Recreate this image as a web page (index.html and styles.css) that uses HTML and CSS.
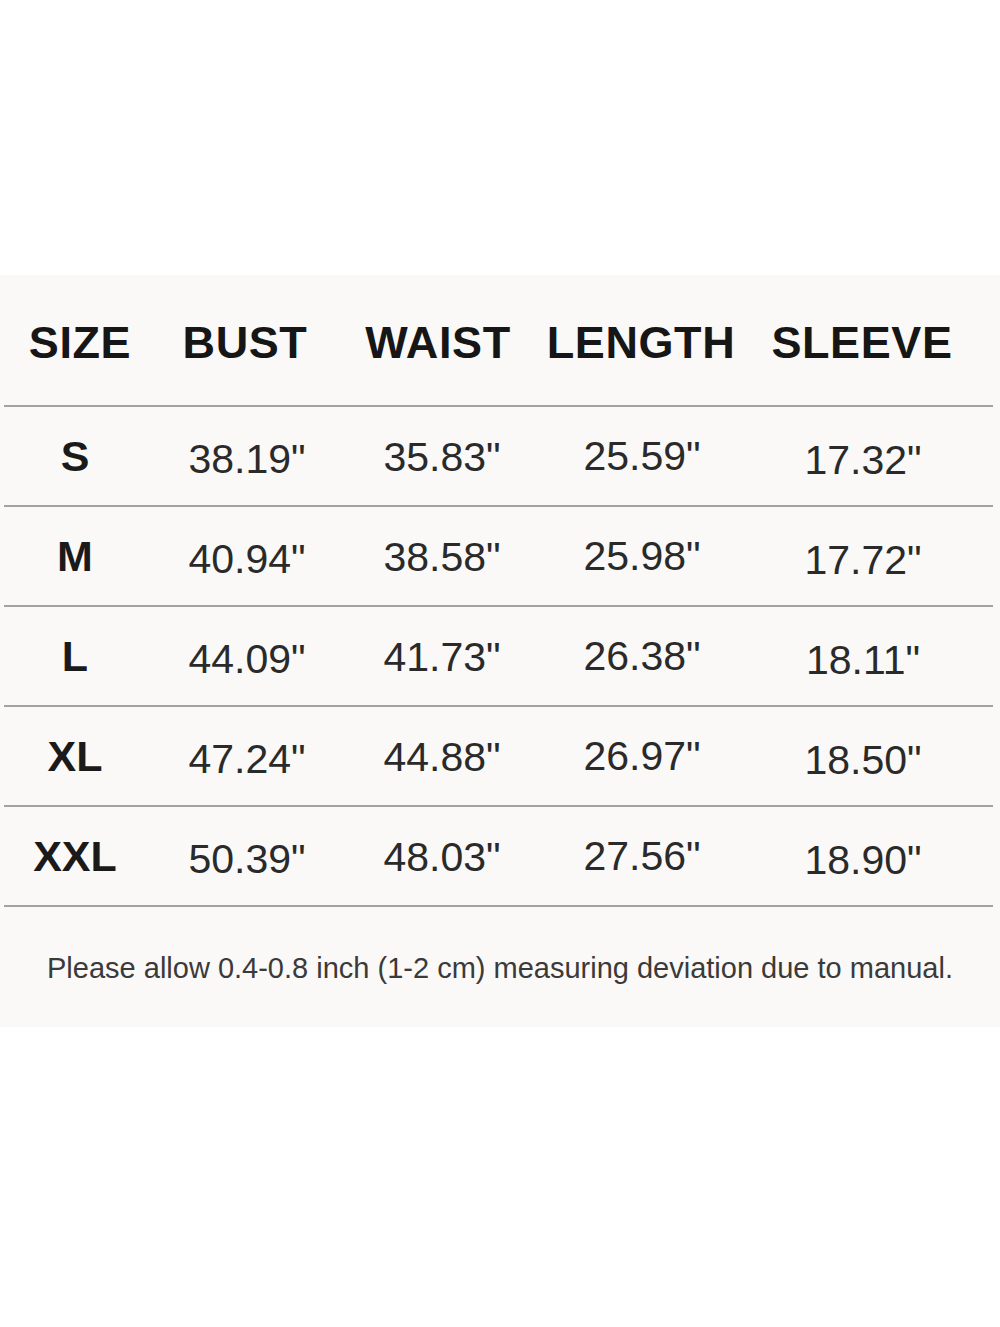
FILE: index.html
```html
<!DOCTYPE html>
<html lang="en">
<head>
<meta charset="utf-8">
<title>Size Chart</title>
<link rel="stylesheet" href="styles.css">
</head>
<body>
<section class="sheet">
  <div class="table">
    <div class="head">
      <div class="h">SIZE</div>
      <div class="h">BUST</div>
      <div class="h">WAIST</div>
      <div class="h">LENGTH</div>
      <div class="h">SLEEVE</div>
    </div>
    <div class="row">
      <div class="size">S</div>
      <div class="v bust">38.19"</div>
      <div class="v waist">35.83"</div>
      <div class="v length">25.59"</div>
      <div class="v sleeve">17.32"</div>
    </div>
    <div class="row">
      <div class="size">M</div>
      <div class="v bust">40.94"</div>
      <div class="v waist">38.58"</div>
      <div class="v length">25.98"</div>
      <div class="v sleeve">17.72"</div>
    </div>
    <div class="row">
      <div class="size">L</div>
      <div class="v bust">44.09"</div>
      <div class="v waist">41.73"</div>
      <div class="v length">26.38"</div>
      <div class="v sleeve">18.11"</div>
    </div>
    <div class="row">
      <div class="size">XL</div>
      <div class="v bust">47.24"</div>
      <div class="v waist">44.88"</div>
      <div class="v length">26.97"</div>
      <div class="v sleeve">18.50"</div>
    </div>
    <div class="row">
      <div class="size">XXL</div>
      <div class="v bust">50.39"</div>
      <div class="v waist">48.03"</div>
      <div class="v length">27.56"</div>
      <div class="v sleeve">18.90"</div>
    </div>
  </div>
  <p class="note">Please allow 0.4-0.8 inch (1-2 cm) measuring deviation due to manual.</p>
</section>
</body>
</html>
```

FILE: styles.css
```css
html, body {
  margin: 0;
  padding: 0;
  background: #ffffff;
}

body {
  font-family: "Liberation Sans", Arial, sans-serif;
  width: 1000px;
  height: 1327px;
}

.sheet {
  margin-top: 275px;
  background: #faf9f7;
}

.table {
  margin: 0 7px 0 4px;
}

.head {
  display: grid;
  grid-template-columns: 152px 178px 208px 198px 244px;
  align-items: center;
  height: 125px;
  padding-top: 5px;
  border-bottom: 2px solid #a2a2a2;
}

.h {
  text-align: center;
  font-weight: 700;
  font-size: 45px;
  line-height: 1;
  letter-spacing: 0.6px;
  color: #161616;
  white-space: nowrap;
}

.row {
  display: grid;
  grid-template-columns: 142px 202px 188px 212px 230px;
  align-items: center;
  height: 98px;
  border-bottom: 2px solid #a2a2a2;
}

.size {
  text-align: center;
  font-weight: 700;
  font-size: 43px;
  line-height: 1;
  color: #1a1a1a;
}

.v {
  text-align: center;
  font-size: 41px;
  line-height: 1;
  color: #2a2a2a;
  white-space: nowrap;
}

.bust { padding-top: 6px; }
.waist { padding-top: 2px; }
.length { padding-top: 1px; }
.sleeve { padding-top: 8px; }

.note {
  margin: 0;
  padding: 47px 0 44px;
  text-align: center;
  font-size: 29px;
  line-height: 29px;
  color: #3a3a3a;
  white-space: nowrap;
}
```
